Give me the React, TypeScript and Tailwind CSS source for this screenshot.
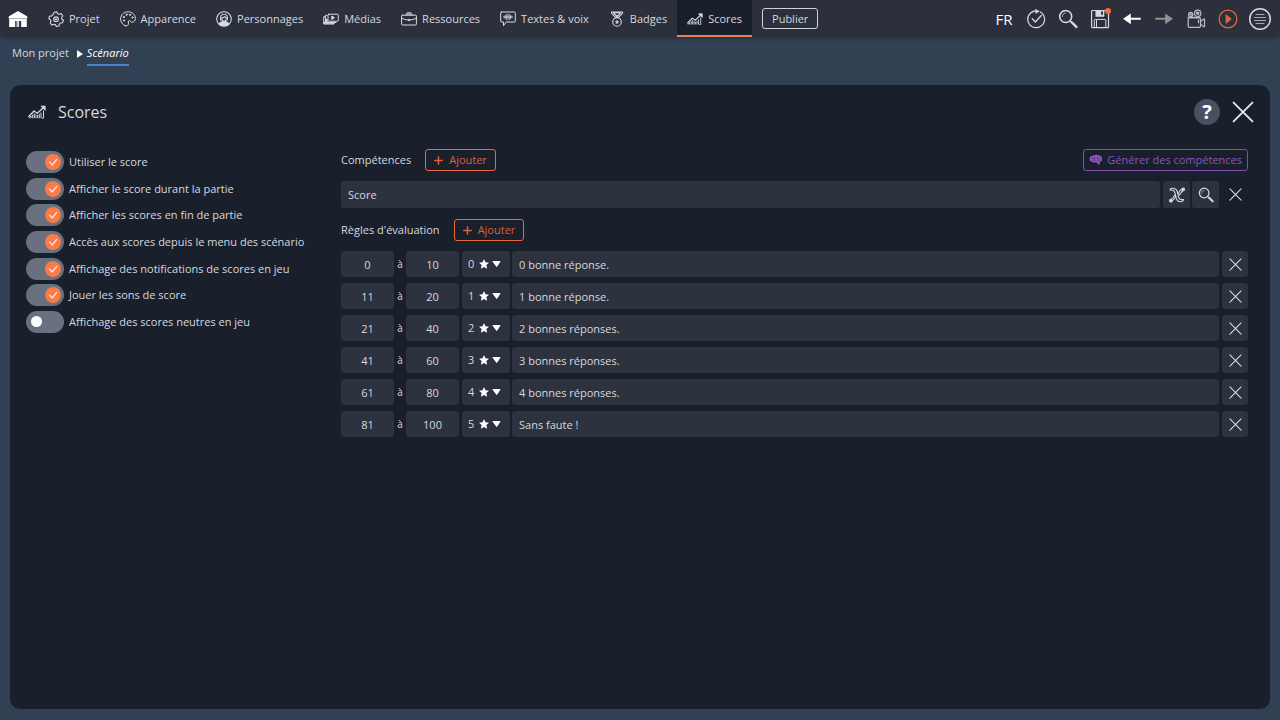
import type { ReactNode } from "react";

const strokeProps = {
  fill: "none",
  stroke: "currentColor",
  strokeLinecap: "round",
  strokeLinejoin: "round",
} as const;

type IconProps = { className?: string };

const HomeIcon = () => (
  <svg viewBox="0 0 20 18" className="h-[18px] w-5" fill="currentColor" aria-hidden="true">
    <path d="M10 1 19 6.200c.5.4.5 2.300 0 2.300H1c-.5 0-.5-1.900 0-2.300Z" />
    <path d="M1.200 8.500h17.600V17h-5.600v-6H7.200v6h-6Z" />
    <path d="M8.500 11h2.700v6H8.500Z" fill="#c9ccd3" />
    <path d="M2 8.600h16" fill="none" stroke="#a0a5af" strokeWidth=".8" />
  </svg>
);

const GearIcon = () => (
  <svg viewBox="0 0 16 16" className="size-4" {...strokeProps} strokeWidth="1.1" aria-hidden="true">
    <path d="M6.200 1.300 8.800.9l.9 1.900 1.500.6 2-.8 1.600 2.200-1.200 1.700.2 1.500 1.600 1.300-.9 2.500-2.200.2-1.100 1.200-.1 1.800-2.700.4-1.100-1.800-1.500-.4-1.900.9-1.700-2.100.9-1.900-.5-1.400L.8 7.800l.7-2.600 2.200-.3 1.200-1.200Z" />
    <circle cx="8" cy="8.200" r="2.300" />
    <circle cx="8" cy="8.200" r=".5" />
  </svg>
);

const PaletteIcon = () => (
  <svg viewBox="0 0 16 16" className="size-4" {...strokeProps} strokeWidth="1" aria-hidden="true">
    <path d="M5.500 14.800c-2.800-.8-4.900-3.500-4.900-6.800C.6 3.900 3.900.8 8 .8s7.400 2.800 7.400 6.600c0 2.500-1.600 3.800-3.400 3.800-1.300 0-1.700-1.700-3-1.500-1.500.3-.2 2-.6 3.400-.3 1.400-1.300 2.100-2.900 1.700Z" />
    <circle cx="4" cy="9.500" r=".7" />
    <circle cx="3.800" cy="6" r=".7" />
    <circle cx="6.500" cy="3.700" r=".7" />
    <circle cx="10" cy="3.800" r=".7" />
    <circle cx="12.500" cy="6.500" r=".7" />
  </svg>
);

const PersonIcon = () => (
  <svg viewBox="0 0 16 16" className="size-4" {...strokeProps} strokeWidth="1.1" aria-hidden="true">
    <circle cx="8" cy="8" r="7.300" />
    <path d="M3 13c.7-1.900 2.200-2.100 3.500-2.400h3c1.300.3 2.800.5 3.500 2.400-2.700 2.400-7.300 2.400-10 0Z" fill="currentColor" />
    <path d="M4.900 9.300C4 5.500 5 3.200 8 3.200s4 2.300 3.100 6.100" />
    <path d="M5.800 6.800c1.800 0 2.500-.6 2.900-1.300.4.800 1 1.200 1.600 1.300 0 2-.8 3.500-2.300 3.500S5.800 8.800 5.800 6.800Z" />
  </svg>
);

const MediaIcon = () => (
  <svg viewBox="0 0 16 16" className="size-4" {...strokeProps} strokeWidth="1" aria-hidden="true">
    <rect x="5" y="3.200" width="10.300" height="7" rx=".8" />
    <path d="M4 4.300H2.500v7.200H13v-.6M2 5.700H.7V13H11v-1" />
    <path d="M.8 11h10v1.800H.8ZM2.700 8h1.800v3.300H2.700Z" fill="currentColor" strokeWidth=".3" />
    <path d="m9 5.300 2.500 1.400L9 8.200Z" fill="currentColor" />
  </svg>
);

const BriefcaseIcon = () => (
  <svg viewBox="0 0 16 16" className="size-4" {...strokeProps} strokeWidth="1" aria-hidden="true">
    <rect x=".6" y="4.200" width="14.800" height="9.800" rx=".8" />
    <path d="M4.800 4 6 1.800h4L11.200 4M6.500 4l.5-1h2l.5 1M.8 7.300c2 1 4 1.400 6 1.600M15.200 7.300c-2 1-4 1.400-6 1.600" />
    <circle cx="8" cy="9" r=".8" fill="currentColor" />
  </svg>
);

const VoiceIcon = () => (
  <svg viewBox="0 0 16 16" className="size-4" {...strokeProps} strokeWidth="1" aria-hidden="true">
    <path d="M1.500 1h13c.5 0 .8.300.8.800v8.400c0 .5-.3.800-.8.800H6.200L3.500 14.700V11h-2c-.5 0-.8-.3-.8-.8V1.800c0-.5.300-.8.800-.8Z" />
    <path d="M3.500 6h9M5.200 4.500v3M6.900 3.300v5.400M9 3.300v5.400M10.700 4.500v3" />
  </svg>
);

const MedalIcon = () => (
  <svg viewBox="0 0 16 16" className="size-4" {...strokeProps} strokeWidth="1.100" aria-hidden="true">
    <path d="M2.500 1h11v1.200L9.500 6.300h-3L2.500 2.200ZM4.500 1.800h7L8 5.500Z" />
    <circle cx="8" cy="10.900" r="4.300" />
    <path d="m8 9 .6 1.300 1.500.1-1.200 1 .4 1.500L8 12.100l-1.300.8.4-1.500-1.200-1 1.500-.1Z" fill="currentColor" strokeWidth=".2" />
  </svg>
);

const ScoreIcon = ({ className = "size-4" }: IconProps) => (
  <svg viewBox="0 0 18 16" className={className} {...strokeProps} strokeWidth="1" aria-hidden="true">
    <path d="M.7 12.500 6 7l3.300 2.300L15.500 3.500" strokeWidth="1.300" />
    <path d="M13.400 2.200h3.700v3.700Z" fill="currentColor" />
    <path d="M1.200 14.200 3 12v2.200M4.700 10.500v3.700M6.300 9.300v4.900M8 10.500v3.700M9.700 11v3.200M11.300 10v4.200M13 8.500v5.700M15.500 6.500v7.700H14" strokeLinecap="butt" />
  </svg>
);

const CheckRoundIcon = () => (
  <svg viewBox="0 0 20 20" className="size-5" {...strokeProps} aria-hidden="true">
    <path d="M14.300 2.900A8.400 8.400 0 1 1 8 2.100" strokeWidth="1.200" />
    <path d="M8 2.100h2.500" />
    <path d="m9.800.5 3.400 1.700L10 4.200Z" fill="currentColor" strokeWidth=".6" />
    <path d="m6.300 9.800 3 3.200 6-6.500" strokeWidth="1.300" />
  </svg>
);

const SearchIcon = ({ className = "size-5" }: IconProps) => (
  <svg viewBox="0 0 20 20" className={className} {...strokeProps} aria-hidden="true">
    <circle cx="7.700" cy="7.500" r="6" strokeWidth="1.600" />
    <path d="M4.300 7.500c0-1.800 1.300-3.200 3-3.400" strokeWidth=".8" />
    <path d="m12.300 12 1.500 1.500" strokeWidth="1.500" />
    <path d="m14 13.500 4.300 4.400" strokeWidth="2.500" />
  </svg>
);

const SaveIcon = () => (
  <svg viewBox="0 0 20 20" className="size-5" {...strokeProps} strokeWidth="1.200" aria-hidden="true">
    <path d="M2.500 1.500h13l3 3v13.300c0 .5-.4.900-.9.900H2.500c-.5 0-.9-.4-.9-.9V2.400c0-.5.400-.9.900-.9Z" />
    <path d="M6 1.500h8v6H6Z" fill="currentColor" strokeWidth=".6" />
    <path d="M11 2.500h1.900v3.300H11Z" fill="#2b303c" stroke="none" />
    <path d="M4.300 18.500v-7.300c0-.5.300-.8.800-.8H15c.5 0 .8.300.8.800v7.300M6.500 11v7" strokeWidth="1" />
  </svg>
);

const ArrowIcon = ({ className = "" }: IconProps) => (
  <svg viewBox="0 0 20 20" className={`size-5 ${className}`} fill="currentColor" aria-hidden="true">
    <path d="M8.800 4.500v4.200h9.500c.8 0 .8 2 0 2H8.800v4.600L1 9.800Z" />
  </svg>
);

const CameraIcon = () => (
  <svg viewBox="0 0 20 20" className="size-5" {...strokeProps} strokeWidth="1.200" aria-hidden="true">
    <rect x="2.200" y="9" width="12.300" height="9.300" rx="1" />
    <path d="m14.700 12.300 2.800-2.100h1v7.400h-1l-2.800-2.300M2 8.300h12" />
    <circle cx="11.700" cy="4.300" r="3.200" />
    <circle cx="11.700" cy="4.300" r="1.100" fill="currentColor" />
    <circle cx="4.700" cy="5.500" r="2.200" />
    <circle cx="4.700" cy="5.500" r=".6" fill="currentColor" />
    <path d="M12.500 11.200v2.500" />
  </svg>
);

const PlayIcon = () => (
  <svg viewBox="0 0 20 20" className="size-5" {...strokeProps} strokeWidth="1.300" aria-hidden="true">
    <circle cx="10" cy="10" r="8.900" />
    <path d="m8.200 6.200 4.600 3.800-4.600 3.800Z" fill="currentColor" />
  </svg>
);

const MenuIcon = () => (
  <svg viewBox="0 0 24 24" className="size-6" {...strokeProps} aria-hidden="true">
    <circle cx="12" cy="12" r="10.300" strokeWidth="1.500" />
    <path d="M8 7.500h8M6.500 10.500h11M6.500 13.500h11M8 16.500h8" strokeWidth="1.200" stroke="#a4a9b3" />
  </svg>
);

const CloseIcon = ({ className = "size-[14px]" }: IconProps) => (
  <svg viewBox="0 0 14 14" className={className} {...strokeProps} aria-hidden="true">
    <path d="m1 1 12 12M13 1 1 13" strokeWidth="1.200" />
  </svg>
);

const PlusIcon = () => (
  <svg viewBox="0 0 9 9" className="size-[9px]" {...strokeProps} strokeWidth="1.500" aria-hidden="true">
    <path d="M4.500.8v7.400M.8 4.500h7.400" />
  </svg>
);

const BrainIcon = () => (
  <svg viewBox="0 0 14 12" className="h-3 w-[14px]" fill="currentColor" aria-hidden="true">
    <path d="M4.500 1.500C6 .4 9 .7 10 1.500c1.800.1 3 1.300 3 2.700.6 1.800-.2 3.100-2 3.500l-.3 2.800H8.900L8 8.500H5.200C3.900 8.500 3.500 8 3 7.700.9 7.400.2 6.300.7 4.800.3 3.200 1.300 2.100 2.800 2.100Z" />
    <path d="M3 4.500h2.500M5.500 3v3.300h2M8.500 2.500v2.300h2.600M3.500 6.500h1M9 6.500h1.700" fill="none" stroke="#3f2a5c" strokeWidth=".6" />
  </svg>
);

const FormulaIcon = () => (
  <svg viewBox="0 0 16 16" className="size-4" {...strokeProps} strokeWidth="1.100" aria-hidden="true">
    <path d="M1.200 2.200c.3-1 1.300-1 2.300-1 2.800 0 4.200 1.100 4.900 3.800l1.400 5.600c.5 2 1.600 2.400 4.900 1.900-.8 1.900-1.800 2.200-3.300 2.200-2.400 0-3.600-1.200-4.200-3.500L5.800 5.500C5.300 3.300 4 2.600 1.200 3.200Z" />
    <path d="M14 2c-2.300 0-3.100 1.500-4.800 4.300M10.300 8c1.700-2.500 2.200-3.400 4-4.500M6.800 9.700C5 12.700 4.300 13.900 2 14M5.800 8C4.300 10.700 3.500 11.800 2 12.600" />
    <circle cx="14.200" cy="2.300" r="1.300" fill="currentColor" />
    <circle cx="1.900" cy="13.700" r="1.300" fill="currentColor" />
  </svg>
);

const navItems = [
  { label: "Projet", icon: <GearIcon /> },
  { label: "Apparence", icon: <PaletteIcon /> },
  { label: "Personnages", icon: <PersonIcon /> },
  { label: "Médias", icon: <MediaIcon /> },
  { label: "Ressources", icon: <BriefcaseIcon /> },
  { label: "Textes & voix", icon: <VoiceIcon /> },
  { label: "Badges", icon: <MedalIcon /> },
  { label: "Scores", icon: <ScoreIcon />, active: true },
];

const options = [
  { label: "Utiliser le score", on: true },
  { label: "Afficher le score durant la partie", on: true },
  { label: "Afficher les scores en fin de partie", on: true },
  { label: "Accès aux scores depuis le menu des scénario", on: true },
  { label: "Affichage des notifications de scores en jeu", on: true },
  { label: "Jouer les sons de score", on: true },
  { label: "Affichage des scores neutres en jeu", on: false },
];

const rules = [
  { from: 0, to: 10, stars: 0, text: "0 bonne réponse." },
  { from: 11, to: 20, stars: 1, text: "1 bonne réponse." },
  { from: 21, to: 40, stars: 2, text: "2 bonnes réponses." },
  { from: 41, to: 60, stars: 3, text: "3 bonnes réponses." },
  { from: 61, to: 80, stars: 4, text: "4 bonnes réponses." },
  { from: 81, to: 100, stars: 5, text: "Sans faute !" },
];

const ToolButton = ({ label, className = "", children }: { label: string; className?: string; children: ReactNode }) => (
  <button type="button" aria-label={label} className={`relative flex w-8 items-center justify-center ${className}`}>
    {children}
  </button>
);

const AddButton = () => (
  <button
    type="button"
    className="flex h-[22px] items-center gap-[6px] rounded-[3px] border border-[#e8683f] px-2 text-[#d9623d]"
  >
    <PlusIcon />
    Ajouter
  </button>
);

const Toggle = ({ label, on }: { label: string; on: boolean }) => (
  <label className="flex cursor-pointer items-center gap-[5px]">
    <input type="checkbox" defaultChecked={on} className="peer sr-only" />
    <span className="flex h-[22px] w-[38px] shrink-0 items-center rounded-full bg-[#697080] px-[3px] peer-checked:justify-end peer-checked:[&>i]:hidden peer-checked:[&>svg]:block">
      <i className="ml-[2px] size-[11px] rounded-full bg-white" />
      <svg viewBox="0 0 16 16" className="hidden size-4" aria-hidden="true">
        <circle cx="8" cy="8" r="8" fill="#fb7a46" />
        <path d="m4.500 8 2.700 3 4.500-5.500" {...strokeProps} stroke="#ffe9df" strokeWidth="1.200" />
      </svg>
    </span>
    <span className="whitespace-nowrap">{label}</span>
  </label>
);

const fieldClass = "h-[26px] min-w-0 rounded-[3px] bg-[#2d323f] text-[#d6d9df] outline-none";
const iconButtonClass = "flex h-[27px] w-[27px] items-center justify-center rounded-[3px] bg-[#2d323f]";

const RuleRow = ({ rule }: { rule: (typeof rules)[number] }) => (
  <div className="flex items-center">
    <input aria-label="De" defaultValue={rule.from} className={`${fieldClass} w-[53px] text-center`} />
    <span className="w-3 text-center text-[10px]">à</span>
    <input aria-label="À" defaultValue={rule.to} className={`${fieldClass} w-[53px] text-center`} />
    <div className="relative ml-[3px]">
      <select aria-label="Étoiles" defaultValue={rule.stars} className={`${fieldClass} block w-12 appearance-none pl-[6px]`}>
        {[0, 1, 2, 3, 4, 5].map((n) => (
          <option key={n} value={n}>
            {n}
          </option>
        ))}
      </select>
      <svg viewBox="0 0 22 10" className="pointer-events-none absolute top-2 left-[17px] h-[10px] w-[22px]" fill="#fff" aria-hidden="true">
        <path d="m5 0 1.500 3.300 3.500.4-2.600 2.400.7 3.600L5 7.900 1.900 9.700l.7-3.600L0 3.700l3.500-.4Z" />
        <path d="M14.300 2h6.400c.7 0 .9.600.5 1.100L18.300 7.500c-.3.400-.8.400-1.100 0l-3.400-4.400c-.4-.5-.1-1.100.5-1.100Z" />
      </svg>
    </div>
    <input aria-label="Message" defaultValue={rule.text} className={`${fieldClass} ml-[2px] flex-1 px-[7px]`} />
    <button type="button" aria-label="Supprimer" className={`${fieldClass} ml-[3px] flex w-[26px] items-center justify-center`}>
      <CloseIcon className="size-[13px]" />
    </button>
  </div>
);

const TopBar = () => (
  <header className="flex h-[37px] items-stretch justify-between rounded-b-[4px] bg-[#2b303c] shadow-[0_1px_4px_rgba(20,25,35,0.5)]">
    <nav className="flex items-stretch pl-2">
      <a href="#accueil" aria-label="Accueil" className="flex w-[30px] items-center text-white">
        <HomeIcon />
      </a>
      {navItems.map((item) => (
        <a
          key={item.label}
          href={`#${item.label}`}
          className={`flex items-center gap-[5px] border-b-2 px-[10px] pt-[2px] whitespace-nowrap ${
            item.active ? "border-[#e98258] bg-[#1a1f2c]" : "border-transparent"
          }`}
        >
          {item.icon}
          {item.label}
        </a>
      ))}
      <button type="button" className="ml-[10px] h-[21px] self-center rounded-[3px] border border-[#cfd3da] px-[9px]">
        Publier
      </button>
    </nav>
    <div className="flex items-stretch pr-1">
      <button type="button" className="w-8 text-[15px] font-medium text-white">
        FR
      </button>
      <ToolButton label="Vérifier"><CheckRoundIcon /></ToolButton>
      <ToolButton label="Rechercher"><SearchIcon /></ToolButton>
      <ToolButton label="Enregistrer">
        <SaveIcon />
        <span className="absolute top-2 right-[5px] size-[6px] rounded-full bg-[#f9693c]" />
      </ToolButton>
      <ToolButton label="Annuler" className="text-white"><ArrowIcon /></ToolButton>
      <ToolButton label="Rétablir" className="text-[#91928f]"><ArrowIcon className="-scale-x-100" /></ToolButton>
      <ToolButton label="Caméra" className="text-[#b9bdc4]"><CameraIcon /></ToolButton>
      <ToolButton label="Jouer" className="text-[#de6740]"><PlayIcon /></ToolButton>
      <ToolButton label="Menu"><MenuIcon /></ToolButton>
    </div>
  </header>
);

const App = () => {
  return (
    <div className="flex min-h-screen flex-col bg-[#324054] font-['Open_Sans','Noto_Sans',sans-serif] text-[11px] leading-4 text-[#d6d9df]">
      <TopBar />
      <nav aria-label="Fil d'Ariane" className="flex h-12 items-start px-3 pt-2">
        <a href="#projet">Mon projet</a>
        <svg viewBox="0 0 6 8" className="mt-[5px] mr-1 ml-2 h-2 w-[6px]" fill="#fff" aria-hidden="true">
          <path d="M0 0 6 4 0 8Z" />
        </svg>
        <a href="#scenario" className="border-b-2 border-[#4a80cf] pb-[3px] font-medium text-white italic">
          Scénario
        </a>
      </nav>

      <main className="mx-[10px] mb-[11px] flex-1 rounded-[10px] bg-[#1a1f2c] pr-[22px] pl-4">
        <div className="flex h-[54px] items-center">
          <ScoreIcon className="ml-[2px] h-4 w-[18px]" />
          <h1 className="ml-3 text-base">Scores</h1>
          <div className="-mr-[6px] ml-auto flex items-center gap-3">
            <button
              type="button"
              aria-label="Aide"
              className="flex size-[26px] items-center justify-center rounded-full bg-[#495062] text-xl font-bold text-white"
            >
              ?
            </button>
            <button type="button" aria-label="Fermer" className="text-[#e4e6ea]">
              <CloseIcon className="size-[22px]" />
            </button>
          </div>
        </div>

        <div className="flex items-start pt-[10px]">
          <div className="mt-[2px] flex h-[182px] w-[315px] shrink-0 flex-col justify-between">
            {options.map((option) => (
              <Toggle key={option.label} {...option} />
            ))}
          </div>

          <section className="min-w-0 flex-1">
            <div className="flex items-center gap-[14px]">
              <h2>Compétences</h2>
              <AddButton />
              <button
                type="button"
                className="ml-auto flex h-[22px] items-center gap-1 rounded-[3px] border border-[#7d4db3] px-[5px] text-[#8a55c0]"
              >
                <BrainIcon />
                Générer des compétences
              </button>
            </div>

            <div className="mt-[10px] flex items-center gap-[2px]">
              <input
                aria-label="Compétence"
                defaultValue="Score"
                className="mr-px h-[27px] min-w-0 flex-1 rounded-[3px] bg-[#2d323f] px-[7px] outline-none"
              />
              <button type="button" aria-label="Formule" className={iconButtonClass}>
                <FormulaIcon />
              </button>
              <button type="button" aria-label="Rechercher" className={iconButtonClass}>
                <SearchIcon className="size-4" />
              </button>
              <button type="button" aria-label="Supprimer" className="ml-px flex size-[26px] items-center justify-center">
                <CloseIcon className="size-[13px]" />
              </button>
            </div>

            <div className="mt-[11px] flex items-center gap-[14px]">
              <h2>Règles d'évaluation</h2>
              <AddButton />
            </div>

            <div className="mt-[10px] flex flex-col gap-[6px]">
              {rules.map((rule) => (
                <RuleRow key={rule.from} rule={rule} />
              ))}
            </div>
          </section>
        </div>
      </main>
    </div>
  );
};

export default App;
